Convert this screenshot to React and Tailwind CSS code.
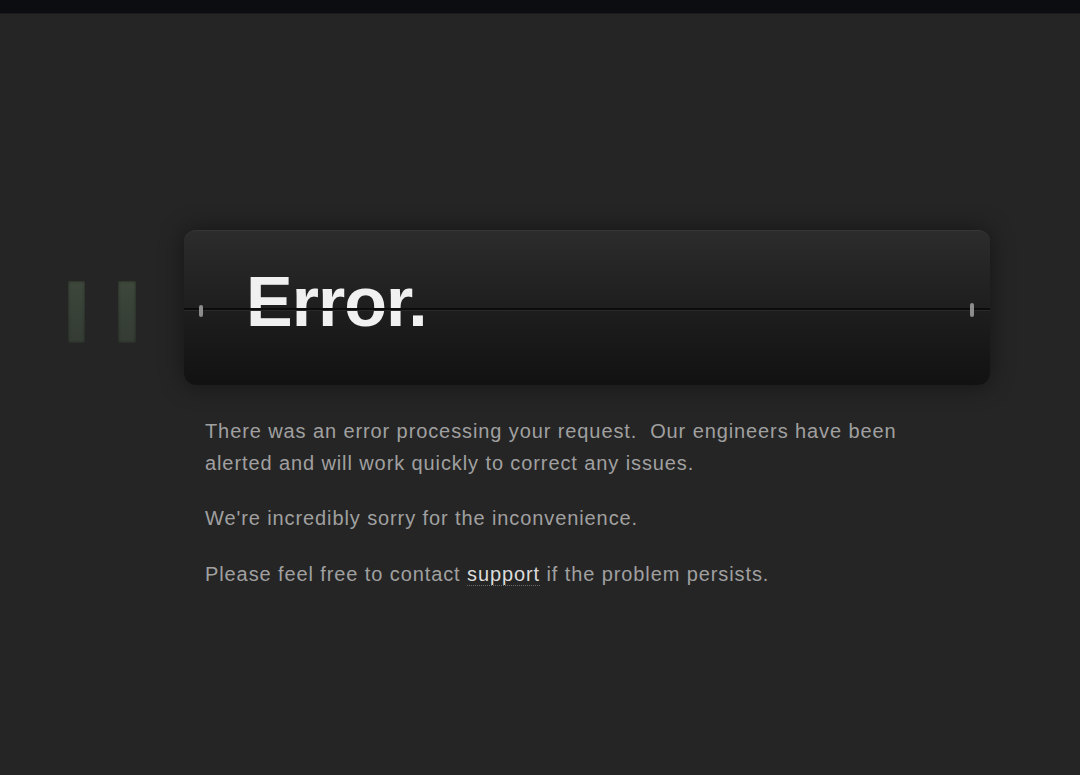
export default function App() {
  return (
    <div className="min-h-[775px] w-full bg-[#252525] font-['Liberation_Sans',Arial,sans-serif]">
      {/* top bar */}
      <div className="h-[14px] bg-[#0c0d11] border-b border-[#1a1b1f]" />

      <div className="pt-[216px]">
        <div className="flex items-center">
          {/* pause icon */}
          <div className="ml-[68px] mt-[8px] flex gap-[33px]">
            <div className="w-[17px] h-[62px] bg-gradient-to-b from-[#3d473b] to-[#343c33] shadow-[inset_0_0_3px_rgba(0,0,0,0.5)]" />
            <div className="w-[18px] h-[62px] bg-gradient-to-b from-[#3d473b] to-[#343c33] shadow-[inset_0_0_3px_rgba(0,0,0,0.5)]" />
          </div>

          {/* split-flap panel */}
          <div className="relative ml-[48px] w-[806px] h-[155px] rounded-[12px] bg-gradient-to-b from-[#2c2c2c] via-[#1e1e1e] to-[#121212] border-t border-[#363636] shadow-[0_0_24px_rgba(0,0,0,0.45)] overflow-hidden flex items-center pl-[62px] pb-[12px]">
            <span className="text-[70px] leading-none font-bold text-[#f0f0f0] tracking-[-1px]">Error.</span>
            {/* flap split */}
            <div className="absolute left-0 right-0 top-[77px] h-[3px] bg-[#0c0c0c] border-b border-[#2a2a2a]" />
            <div className="absolute left-[15px] top-[74px] w-[4px] h-[12px] rounded-sm bg-[#8c8c8c]" />
            <div className="absolute right-[16px] top-[72px] w-[4px] h-[14px] rounded-sm bg-[#8c8c8c]" />
          </div>
        </div>

        {/* message */}
        <div className="ml-[205px] mt-[30px] w-[700px] text-[20px] leading-[32px] tracking-[0.9px] text-[#a0a0a0]">
          <p>
            There was an error processing your request.&nbsp; Our engineers have been alerted and will work quickly to correct any issues.
          </p>
          <p className="mt-[23px]">We're incredibly sorry for the inconvenience.</p>
          <p className="mt-[24px]">
            Please feel free to contact{" "}
            <a href="#" className="text-[#dcdcdc] border-b border-dotted border-[#6a6a6a]">support</a>{" "}
            if the problem persists.
          </p>
        </div>
      </div>
    </div>
  );
}
